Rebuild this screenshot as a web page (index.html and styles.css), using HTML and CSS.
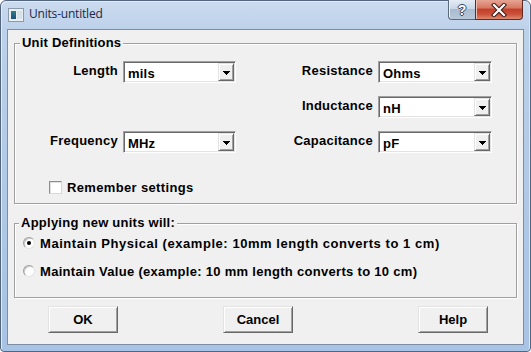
FILE: index.html
```html
<!DOCTYPE html>
<html>
<head>
<meta charset="utf-8">
<title>Units-untitled</title>
<link rel="stylesheet" href="styles.css">
</head>
<body>
<div class="window">
  <div class="titlebar">
    <div class="app-icon"><span class="app-icon-pane"></span></div>
    <div class="title">Units-untitled</div>
    <div class="caption-buttons">
      <div class="cap-btn help"><span>?</span></div>
      <div class="cap-btn close">
        <svg width="16" height="14" viewBox="0 0 16 14">
          <path d="M3 2 L13 12 M13 2 L3 12" stroke="#3a1a16" stroke-width="4.2" stroke-linecap="square"/>
          <path d="M3 2 L13 12 M13 2 L3 12" stroke="#ffffff" stroke-width="2.2" stroke-linecap="square"/>
        </svg>
      </div>
    </div>
  </div>
  <div class="client">
    <fieldset class="group defs">
      <legend>Unit Definitions</legend>
      <div class="unit-grid">
        <span class="lbl">Length</span>
        <div class="combo"><span class="combo-value">mils</span><span class="combo-btn"><svg width="7" height="4" viewBox="0 0 7 4" shape-rendering="crispEdges"><path d="M0 0h7v1h-1v1h-1v1h-1v1h-1v-1h-1v-1h-1v-1h-1z" fill="#000"/></svg></span></div>
        <span class="lbl">Resistance</span>
        <div class="combo"><span class="combo-value">Ohms</span><span class="combo-btn"><svg width="7" height="4" viewBox="0 0 7 4" shape-rendering="crispEdges"><path d="M0 0h7v1h-1v1h-1v1h-1v1h-1v-1h-1v-1h-1v-1h-1z" fill="#000"/></svg></span></div>

        <span class="lbl"></span>
        <span class="empty"></span>
        <span class="lbl">Inductance</span>
        <div class="combo"><span class="combo-value">nH</span><span class="combo-btn"><svg width="7" height="4" viewBox="0 0 7 4" shape-rendering="crispEdges"><path d="M0 0h7v1h-1v1h-1v1h-1v1h-1v-1h-1v-1h-1v-1h-1z" fill="#000"/></svg></span></div>

        <span class="lbl">Frequency</span>
        <div class="combo"><span class="combo-value">MHz</span><span class="combo-btn"><svg width="7" height="4" viewBox="0 0 7 4" shape-rendering="crispEdges"><path d="M0 0h7v1h-1v1h-1v1h-1v1h-1v-1h-1v-1h-1v-1h-1z" fill="#000"/></svg></span></div>
        <span class="lbl">Capacitance</span>
        <div class="combo"><span class="combo-value">pF</span><span class="combo-btn"><svg width="7" height="4" viewBox="0 0 7 4" shape-rendering="crispEdges"><path d="M0 0h7v1h-1v1h-1v1h-1v1h-1v-1h-1v-1h-1v-1h-1z" fill="#000"/></svg></span></div>
      </div>
      <div class="check-row"><span class="checkbox"></span><span class="check-text">Remember settings</span></div>
    </fieldset>
    <fieldset class="group apply">
      <legend>Applying new units will:</legend>
      <div class="radio-row"><span class="radio checked"><span class="dot"></span></span><span class="radio-text">Maintain Physical (example: 10mm length converts to 1 cm)</span></div>
      <div class="radio-row second"><span class="radio"></span><span class="radio-text value">Maintain Value (example: 10 mm length converts to 10 cm)</span></div>
    </fieldset>
    <div class="buttons">
      <div class="btn ok">OK</div>
      <div class="btn cancel">Cancel</div>
      <div class="btn help-btn">Help</div>
    </div>
  </div>
</div>
</body>
</html>
```

FILE: styles.css
```css
html, body {
  margin: 0;
  padding: 0;
  background: #ffffff;
}
body {
  width: 531px;
  height: 352px;
  overflow: hidden;
  font-family: "Liberation Sans", Arial, sans-serif;
}
.window {
  box-sizing: border-box;
  width: 531px;
  height: 352px;
  border: 1px solid #53667f;
  border-radius: 6px 6px 4px 4px;
  background: linear-gradient(to bottom, #cbdbef 0px, #bcd1ea 30px, #aec8e6 200px, #a8c3e3 100%);
  box-shadow: inset 1px 1px 0 #e2ecf7, inset -1px 0 0 #dbe6f3;
  padding: 0 6px 6px 6px;
  display: flex;
  flex-direction: column;
}
.titlebar {
  height: 28px;
  display: flex;
  align-items: flex-start;
  flex: none;
}
.app-icon {
  box-sizing: border-box;
  width: 16px;
  height: 14px;
  margin: 7px 0 0 1px;
  border: 1px solid #8b9aa9;
  background: #e9eef2;
  display: flex;
  padding: 2px;
}
.app-icon-pane {
  width: 5px;
  height: 100%;
  background: linear-gradient(to bottom, #2f7d8a, #1d4e7a);
  box-shadow: 6px 0 0 #d6e2ea;
}
.title {
  margin: 5px 0 0 5px;
  font-family: "Open Sans", "Noto Sans", sans-serif;
  font-size: 12px;
  line-height: 16px;
  color: #1a2848;
  letter-spacing: -0.2px;
}
.caption-buttons {
  margin-left: auto;
  margin-right: 1px;
  margin-top: -1px;
  display: flex;
}
.cap-btn {
  box-sizing: border-box;
  height: 20px;
  display: flex;
  align-items: center;
  justify-content: center;
  border: 1px solid #5a6a7c;
  border-top: none;
}
.cap-btn.help {
  width: 27px;
  border-radius: 0 0 0 4px;
  border-right: none;
  background: linear-gradient(to bottom, #e4ecf5 0%, #c9d6e5 45%, #a9bbd0 50%, #b8c8da 100%);
  box-shadow: inset 1px 0 0 #eef3f9;
}
.cap-btn.help span {
  font-family: "Liberation Sans", Arial, sans-serif;
  font-weight: bold;
  font-size: 14px;
  line-height: 14px;
  color: #ffffff;
  text-shadow: 1px 0 0 #34465c, -1px 0 0 #34465c, 0 1px 0 #34465c, 0 -1px 0 #34465c;
}
.cap-btn.close {
  width: 48px;
  border-radius: 0 0 4px 0;
  border-color: #5b2b24;
  background: linear-gradient(to bottom, #e6a595 0%, #d77a64 40%, #c4402a 50%, #c9513a 75%, #de8a6f 100%);
  box-shadow: inset 1px 0 0 #f0bfb2;
}
.client {
  flex: 1;
  border: 1px solid #7d8ea4;
  background: #f0f0f0;
  display: flex;
  flex-direction: column;
  font-size: 13px;
  font-weight: bold;
  color: #000;
}
.group {
  margin: 5px 6px 0 6px;
  padding: 0;
  border: 1px solid #a0a0a0;
  box-shadow: inset 1px 1px 0 #ffffff, 1px 1px 0 #ffffff;
  min-width: 0;
}
.group legend {
  margin-left: 5px;
  padding: 0 2px;
  line-height: 16px;
  background: #f0f0f0;
  font-weight: bold;
  letter-spacing: 0.2px;
}
.group.apply legend {
  margin-left: 4px;
  letter-spacing: 0.25px;
}
.unit-grid {
  display: grid;
  grid-template-columns: 98px 113px 132px 114px;
  grid-auto-rows: 22px;
  column-gap: 5px;
  row-gap: 13px;
  margin: 10px 0 0 5px;
}
.lbl {
  text-align: right;
  line-height: 16px;
  padding-top: 2px;
  white-space: nowrap;
  letter-spacing: 0.25px;
}
.combo {
  box-sizing: border-box;
  display: flex;
  height: 22px;
  padding: 1px;
  border: 1px solid;
  border-color: #a0a0a0 #ffffff #ffffff #a0a0a0;
  box-shadow: inset 1px 1px 0 #696969, inset -1px -1px 0 #e3e3e3;
  background: #ffffff;
}
.combo-value {
  flex: 1;
  padding: 4px 0 0 3px;
  line-height: 14px;
  letter-spacing: 0.2px;
}
.combo-btn {
  box-sizing: border-box;
  width: 16px;
  height: 18px;
  border: 1px solid;
  border-color: #e3e3e3 #696969 #696969 #e3e3e3;
  box-shadow: inset 1px 1px 0 #ffffff, inset -1px -1px 0 #a0a0a0;
  background: #f0f0f0;
  display: flex;
  align-items: center;
  justify-content: center;
  padding-top: 1px;
}
.combo-btn svg {
  display: block;
}
.check-row {
  display: flex;
  align-items: center;
  gap: 5px;
  margin: 26px 0 8px 34px;
  height: 16px;
}
.check-text {
  letter-spacing: 0.35px;
}
.checkbox {
  box-sizing: border-box;
  width: 13px;
  height: 13px;
  border: 1px solid;
  border-color: #8e8f8f #d8d8d8 #d8d8d8 #8e8f8f;
  background: #ffffff;
  box-shadow: inset 1px 1px 0 #e0e0e0;
}
.group.apply {
  margin-top: 11px;
  padding-bottom: 18px;
}
.radio-row {
  display: flex;
  align-items: center;
  gap: 5px;
  height: 16px;
  margin: 4px 0 0 8px;
  white-space: nowrap;
}
.radio-row.second {
  margin-top: 12px;
}
.radio-text {
  letter-spacing: 0.55px;
}
.radio-text.value {
  letter-spacing: 0.3px;
}
.radio {
  box-sizing: border-box;
  width: 12px;
  height: 12px;
  border-radius: 50%;
  border: 1px solid;
  border-color: #a0a0a0 #e3e3e3 #e3e3e3 #a0a0a0;
  background: #ffffff;
  box-shadow: inset 1px 1px 0 #c8c8c8;
  display: flex;
  align-items: center;
  justify-content: center;
}
.radio .dot {
  width: 4px;
  height: 4px;
  border-radius: 50%;
  background: #000;
}
.buttons {
  display: flex;
  margin: 8px 0 0 40px;
}
.btn {
  box-sizing: border-box;
  width: 70px;
  height: 27px;
  display: flex;
  align-items: center;
  justify-content: center;
  border: 1px solid;
  border-color: #e3e3e3 #696969 #696969 #e3e3e3;
  box-shadow: inset 1px 1px 0 #ffffff, inset -1px -1px 0 #a0a0a0;
  background: #f0f0f0;
}
.btn.cancel {
  margin-left: 105px;
}
.btn.help-btn {
  margin-left: 125px;
}
```
